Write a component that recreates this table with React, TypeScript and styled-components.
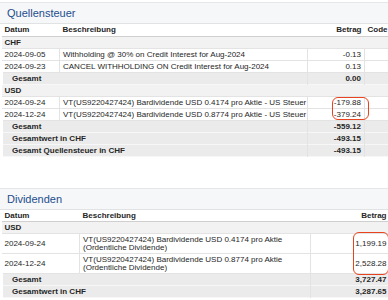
import styled, { createGlobalStyle } from 'styled-components';

type RowKind = 'head' | 'group' | 'data' | 'total';

type Entry = {
  kind: RowKind;
  date?: string;
  label: React.ReactNode;
  amount?: string;
  mark?: { top: number; left: number; width: number; height: number };
};

const taxRows: Entry[] = [
  { kind: 'group', label: 'CHF' },
  { kind: 'data', date: '2024-09-05', label: 'Withholding @ 30% on Credit Interest for Aug-2024', amount: '-0.13' },
  { kind: 'data', date: '2024-09-23', label: 'CANCEL WITHHOLDING ON Credit Interest for Aug-2024', amount: '0.13' },
  { kind: 'total', label: 'Gesamt', amount: '0.00' },
  { kind: 'group', label: 'USD' },
  {
    kind: 'data',
    date: '2024-09-24',
    label: 'VT(US9220427424) Bardividende USD 0.4174 pro Aktie - US Steuer',
    amount: '-179.88',
    mark: { top: 0, left: 24, width: 37, height: 23 },
  },
  { kind: 'data', date: '2024-12-24', label: 'VT(US9220427424) Bardividende USD 0.8774 pro Aktie - US Steuer', amount: '-379.24' },
  { kind: 'total', label: 'Gesamt', amount: '-559.12' },
  { kind: 'total', label: 'Gesamtwert in CHF', amount: '-493.15' },
  { kind: 'total', label: 'Gesamt Quellensteuer in CHF', amount: '-493.15' },
];

const dividendRows: Entry[] = [
  { kind: 'group', label: 'USD' },
  {
    kind: 'data',
    date: '2024-09-24',
    label: (
      <>
        VT(US9220427424) Bardividende USD 0.4174 pro Aktie
        <br />
        (Ordentliche Dividende)
      </>
    ),
    amount: '1,199.19',
    mark: { top: -2, left: 42, width: 36, height: 43 },
  },
  {
    kind: 'data',
    date: '2024-12-24',
    label: (
      <>
        VT(US9220427424) Bardividende USD 0.8774 pro Aktie
        <br />
        (Ordentliche Dividende)
      </>
    ),
    amount: '2,528.28',
  },
  { kind: 'total', label: 'Gesamt', amount: '3,727.47' },
  { kind: 'total', label: 'Gesamtwert in CHF', amount: '3,287.65' },
];

function ReportTable({
  rows,
  widths,
  withCode,
  tall,
}: {
  rows: Entry[];
  widths: number[];
  withCode?: boolean;
  tall?: boolean;
}) {
  const span = withCode ? 4 : 3;
  return (
    <Table>
      <colgroup>
        {widths.map((w, i) => (
          <col key={i} style={{ width: w }} />
        ))}
      </colgroup>
      <tbody>
        <Row $kind="head">
          <Cell>Datum</Cell>
          <Cell>Beschreibung</Cell>
          <Cell $align="right">Betrag</Cell>
          {withCode && <Cell>Code</Cell>}
        </Row>
        {rows.map((r, i) => {
          if (r.kind === 'group') {
            return (
              <Row $kind="group" key={i}>
                <Cell colSpan={span}>{r.label}</Cell>
              </Row>
            );
          }
          if (r.kind === 'total') {
            return (
              <Row $kind="total" key={i}>
                <Cell colSpan={2} $indent $divider>
                  {r.label}
                </Cell>
                <Cell $align="right" $divider={withCode}>
                  {r.amount}
                </Cell>
                {withCode && <Cell />}
              </Row>
            );
          }
          return (
            <Row $kind="data" $tall={tall} key={i}>
              <Cell $divider>{r.date}</Cell>
              <Cell $divider $tight={tall}>
                {r.label}
              </Cell>
              <AmountCell $align="right" $divider={withCode}>
                {r.amount}
                {r.mark && (
                  <Highlight
                    $top={r.mark.top}
                    $left={r.mark.left}
                    $width={r.mark.width}
                    $height={r.mark.height}
                  />
                )}
              </AmountCell>
              {withCode && <Cell />}
            </Row>
          );
        })}
      </tbody>
    </Table>
  );
}

export default function App() {
  return (
    <>
      <GlobalStyle />
      <Page>
        <Panel>
          <PanelHeader>Quellensteuer</PanelHeader>
          <ReportTable rows={taxRows} widths={[58, 248, 57, 25]} withCode />
        </Panel>
        <Panel>
          <PanelHeader>Dividenden</PanelHeader>
          <ReportTable rows={dividendRows} widths={[78, 231, 79]} tall />
        </Panel>
      </Page>
    </>
  );
}

const GlobalStyle = createGlobalStyle`
  body {
    margin: 0;
    background: #ffffff;
    font-family: "Liberation Sans", Arial, sans-serif;
    color: #262626;
  }
`;

const Page = styled.div`
  width: 388px;
  padding-top: 2px;
  display: flex;
  flex-direction: column;
  gap: 31px;
`;

const Panel = styled.section`
  display: flex;
  flex-direction: column;
`;

const PanelHeader = styled.h2`
  margin: 0;
  height: 20px;
  padding: 0 7px;
  display: flex;
  align-items: center;
  background: #f6f7f8;
  border-top: 1px solid #e4e6e8;
  border-bottom: 1px solid #e0e2e4;
  font-size: 11px;
  font-weight: 400;
  color: #1d4e8e;
`;

const Table = styled.table`
  width: 388px;
  border-collapse: collapse;
  table-layout: fixed;
  font-size: 8px;
`;

const rowBg: Record<RowKind, string> = {
  head: '#ffffff',
  group: '#f2f2f2',
  data: '#ffffff',
  total: '#ebebeb',
};

const Row = styled.tr<{ $kind: RowKind; $tall?: boolean }>`
  background: ${(p) => rowBg[p.$kind]};
  font-weight: ${(p) => (p.$kind === 'data' ? 400 : 700)};
  height: ${(p) => (p.$tall ? '20px' : '12px')};
  border-bottom: 1px solid
    ${(p) => (p.$kind === 'head' ? '#cfcfcf' : p.$kind === 'total' ? '#f7f7f7' : '#e3e3e3')};

  & > td:first-child {
    border-left: ${(p) => (p.$kind === 'total' ? '3px solid #ffffff' : 'none')};
  }
`;

const Cell = styled.td<{
  $align?: 'left' | 'right';
  $divider?: boolean;
  $indent?: boolean;
  $tight?: boolean;
}>`
  padding: 1px 3px 1px ${(p) => (p.$indent ? '9px' : '3px')};
  line-height: ${(p) => (p.$tight ? '7.5px' : '9px')};
  text-align: ${(p) => p.$align ?? 'left'};
  vertical-align: middle;
  white-space: nowrap;
  overflow: visible;
  border-right: ${(p) => (p.$divider ? '1px solid #e3e3e3' : 'none')};
`;

const AmountCell = styled(Cell)`
  position: relative;
`;

const Highlight = styled.span<{ $top: number; $left: number; $width: number; $height: number }>`
  position: absolute;
  top: ${(p) => p.$top}px;
  left: ${(p) => p.$left}px;
  width: ${(p) => p.$width}px;
  height: ${(p) => p.$height}px;
  box-sizing: border-box;
  border: 1.5px solid #e8431f;
  border-radius: 6px;
  pointer-events: none;
`;
